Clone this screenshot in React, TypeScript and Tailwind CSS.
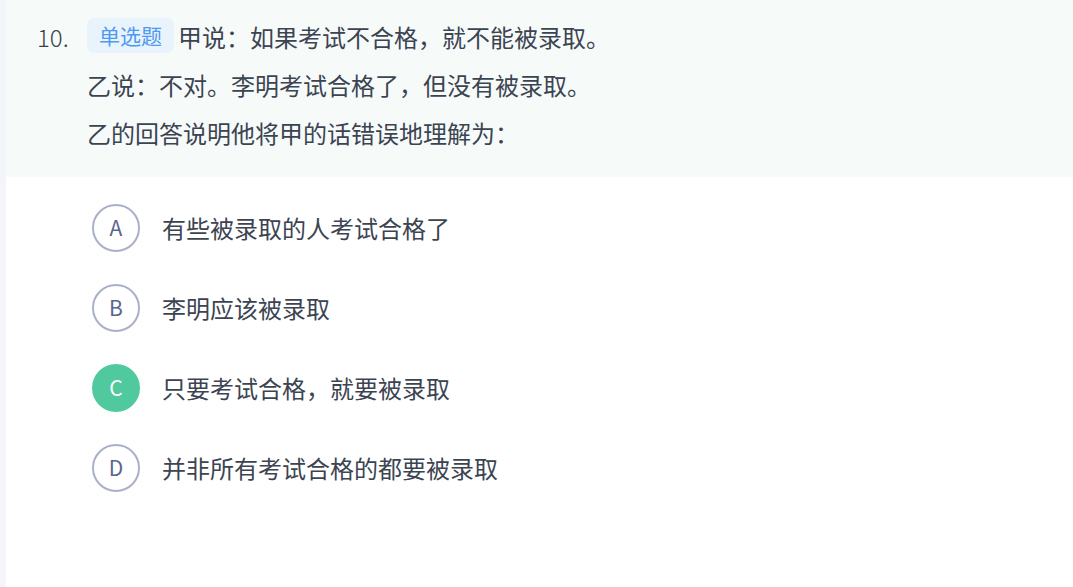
const font = { fontFamily: '"Noto Sans CJK SC", "Noto Sans", sans-serif' };

const options = [
  { key: 'A', text: '有些被录取的人考试合格了' },
  { key: 'B', text: '李明应该被录取' },
  { key: 'C', text: '只要考试合格，就要被录取' },
  { key: 'D', text: '并非所有考试合格的都要被录取' },
];

export default function App() {
  const selected = 'C';

  return (
    <div className="flex h-[587px] w-full bg-white text-[#3c4452]" style={font}>
      {/* Left rail */}
      <div className="w-[6px] shrink-0 bg-[#f4f5f9]" />

      <main className="flex-1">
        {/* Question stem */}
        <section className="flex h-[177px] bg-[#f6fbfa] pl-[31px] pt-[13px]">
          <div className="w-[50px] shrink-0 text-[24px] font-light leading-[48px] text-[#3a3f4a]">10.</div>
          <div className="text-[24px] leading-[48px]">
            <p className="flex items-center">
              <span className="mr-[4px] -mt-[4px] flex h-[35px] w-[87px] items-center justify-center rounded-[7px] bg-[#e9f3fc] text-[21px] text-[#4e99f1]">
                单选题
              </span>
              甲说：如果考试不合格，就不能被录取。
            </p>
            <p>乙说：不对。李明考试合格了，但没有被录取。</p>
            <p>乙的回答说明他将甲的话错误地理解为：</p>
          </div>
        </section>

        {/* Options */}
        <ul className="pl-[86px] pt-[11px]">
          {options.map((o) => {
            const active = o.key === selected;
            return (
              <li key={o.key} className="flex h-[80px] items-center">
                <span
                  className={
                    active
                      ? 'flex h-[48px] w-[48px] items-center justify-center rounded-full bg-[#4fc99d] text-[21px] text-white'
                      : 'flex h-[48px] w-[48px] items-center justify-center rounded-full border-2 border-[#aab0c8] text-[21px] text-[#5a6590]'
                  }
                >
                  {o.key}
                </span>
                <span className="ml-[22px] text-[24px]">{o.text}</span>
              </li>
            );
          })}
        </ul>
      </main>
    </div>
  );
}
